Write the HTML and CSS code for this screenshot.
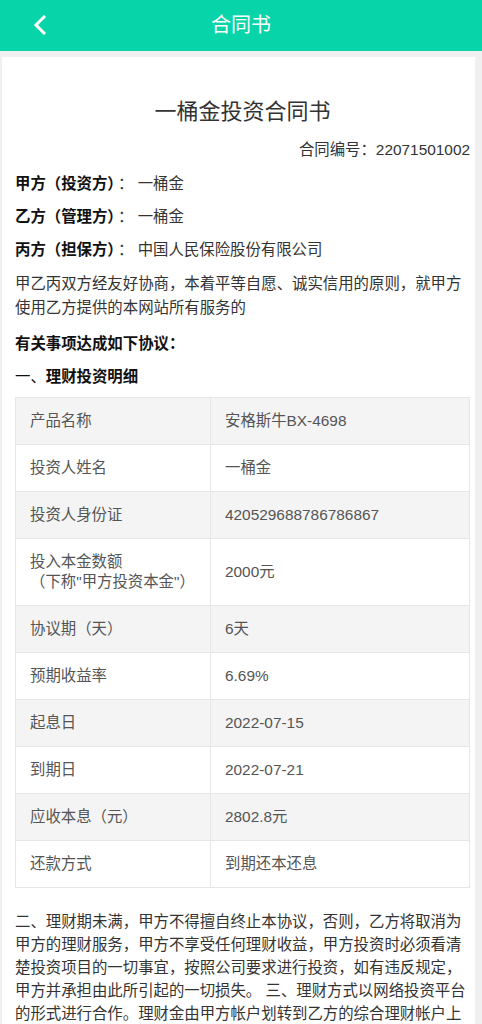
FILE: index.html
```html
<!DOCTYPE html>
<html lang="zh-CN">
<head>
<meta charset="utf-8">
<title>合同书</title>
<link rel="stylesheet" href="styles.css">
</head>
<body>
<header class="topbar">
  <span class="back">
    <svg width="14" height="20" viewBox="0 0 14 20"><polyline points="11,2 3,10 11,18" fill="none" stroke="#fff" stroke-width="3" stroke-linecap="square" stroke-linejoin="miter"/></svg>
  </span>
  <h1 class="topbar-title">合同书</h1>
</header>
<main class="card">
  <h2 class="doc-title">一桶金投资合同书</h2>
  <p class="doc-no">合同编号：22071501002</p>
  <p class="party"><b>甲方（投资方）</b>： 一桶金</p>
  <p class="party"><b>乙方（管理方）</b>： 一桶金</p>
  <p class="party"><b>丙方（担保方）</b>： 中国人民保险股份有限公司</p>
  <p class="intro">甲乙丙双方经友好协商，本着平等自愿、诚实信用的原则，就甲方使用乙方提供的本网站所有服务的</p>
  <p class="heading"><b>有关事项达成如下协议：</b></p>
  <p class="heading2">一、<b>理财投资明细</b></p>
  <table class="detail">
    <tr class="odd"><td>产品名称</td><td>安格斯牛BX-4698</td></tr>
    <tr><td>投资人姓名</td><td>一桶金</td></tr>
    <tr class="odd"><td>投资人身份证</td><td>420529688786786867</td></tr>
    <tr class="tall"><td>投入本金数额<br>（下称"甲方投资本金"）</td><td>2000元</td></tr>
    <tr class="odd"><td>协议期（天）</td><td>6天</td></tr>
    <tr><td>预期收益率</td><td>6.69%</td></tr>
    <tr class="odd"><td>起息日</td><td>2022-07-15</td></tr>
    <tr><td>到期日</td><td>2022-07-21</td></tr>
    <tr class="odd"><td>应收本息（元）</td><td>2802.8元</td></tr>
    <tr><td>还款方式</td><td>到期还本还息</td></tr>
  </table>
  <p class="terms">二、理财期未满，甲方不得擅自终止本协议，否则，乙方将取消为甲方的理财服务，甲方不享受任何理财收益，甲方投资时必须看清楚投资项目的一切事宜，按照公司要求进行投资，如有违反规定，甲方并承担由此所引起的一切损失。 三、理财方式以网络投资平台的形式进行合作。理财金由甲方帐户划转到乙方的综合理财帐户上进行具体的理财操作，由于甲方全权委托乙方理财，因此在股权投资过程中所产生的一切风险由乙方及丙方承担，甲方不承担任何风险。</p>
</main>
</body>
</html>
```

FILE: styles.css
```css
html, body {
  margin: 0;
  padding: 0;
}
body {
  background: #f0f0f0;
  font-family: "Liberation Sans", "Noto Sans CJK SC", sans-serif;
  font-size: 15.4px;
  color: #333;
}
.topbar {
  height: 51px;
  background: #07d4a9;
  display: flex;
  align-items: center;
  justify-content: center;
  position: relative;
}
.back {
  position: absolute;
  left: 33px;
  top: 15px;
  width: 14px;
  height: 20px;
  display: block;
}
.back svg { display: block; }
.topbar-title {
  margin: 0;
  font-size: 20px;
  font-weight: normal;
  color: #fff;
  line-height: 51px;
}
.card {
  display: block;
  background: #fff;
  margin: 6px 7px 0 2px;
  padding: 40px 5px 20px 13px;
}
.doc-title {
  margin: 0;
  text-align: center;
  font-size: 22px;
  font-weight: normal;
  line-height: 30px;
  color: #333;
}
.doc-no {
  margin: 11px 0 0;
  text-align: right;
  line-height: 24px;
  color: #333;
}
.party {
  margin: 0;
  line-height: 33px;
  color: #333;
}
.doc-no + .party { margin-top: 5px; }
.party b {
  color: #111;
  margin-right: 3px;
}
.intro {
  margin: 6px 0 0;
  line-height: 24px;
  color: #333;
}
.heading {
  margin: 12px 0 0;
  line-height: 24px;
  color: #111;
}
.heading2 {
  margin: 9px 0 0;
  line-height: 24px;
  color: #111;
}
.detail {
  margin-top: 8px;
  width: 100%;
  border-collapse: collapse;
  color: #555;
}
.detail td {
  border: 1px solid #e6e6e6;
  height: 47px;
  padding: 0 14px;
  box-sizing: border-box;
  line-height: 20px;
  vertical-align: middle;
}
.detail td:first-child { width: 195px; }
.detail tr.odd td { background: #f4f4f4; }
.detail tr.tall td { height: 67px; }
.terms {
  margin: 22px 0 0;
  line-height: 23px;
  color: #333;
}
```
